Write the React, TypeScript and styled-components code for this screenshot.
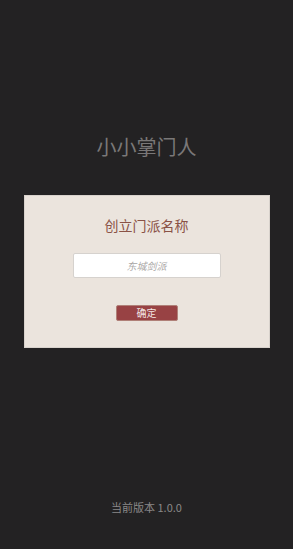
import React from "react";
import styled, { createGlobalStyle } from "styled-components";

const Global = createGlobalStyle`
  html, body { margin: 0; padding: 0; background: #232223; }
  body { font-family: "Noto Sans CJK SC", "Noto Sans", sans-serif; }
  * { box-sizing: border-box; }
`;

const Page = styled.div`
  min-height: 100vh;
  display: flex;
  flex-direction: column;
  align-items: center;
  background: #232223;
  padding-bottom: 34px;
`;

const AppTitle = styled.h1`
  margin: 133px 0 0;
  font-size: 20px;
  line-height: 28px;
  font-weight: 400;
  color: #7a7878;
  letter-spacing: 0;
`;

const Card = styled.div`
  margin-top: 34px;
  width: 246px;
  height: 153px;
  background: #ebe4dd;
  border: 1px solid #d8d2cc;
  display: flex;
  flex-direction: column;
  align-items: center;
  padding-top: 19px;
`;

const CardTitle = styled.h2`
  margin: 0;
  font-size: 14px;
  line-height: 20px;
  font-weight: 400;
  color: #8a5246;
`;

const NameInput = styled.input`
  margin-top: 18px;
  width: 148px;
  height: 25px;
  border: 1px solid #d6d2ce;
  border-radius: 2px;
  background: #fff;
  text-align: center;
  font-family: "Noto Sans CJK SC", sans-serif;
  font-size: 10px;
  outline: none;
  &::placeholder {
    color: #a9a6a4;
    font-style: italic;
  }
`;

const ConfirmButton = styled.button`
  margin-top: 27px;
  width: 62px;
  height: 16px;
  padding: 0;
  border: 1px solid #b08078;
  border-radius: 2px;
  background: #984244;
  color: #f3e6e4;
  font-family: "Noto Sans CJK SC", sans-serif;
  font-size: 10px;
  line-height: 14px;
`;

const Version = styled.div`
  margin-top: auto;
  font-size: 11px;
  line-height: 16px;
  color: #8a8888;
`;

export default function App() {
  return (
    <>
      <Global />
      <Page>
        <AppTitle>小小掌门人</AppTitle>
        <Card>
          <CardTitle>创立门派名称</CardTitle>
          <NameInput placeholder="东城剑派" />
          <ConfirmButton>确定</ConfirmButton>
        </Card>
        <Version>当前版本 1.0.0</Version>
      </Page>
    </>
  );
}
